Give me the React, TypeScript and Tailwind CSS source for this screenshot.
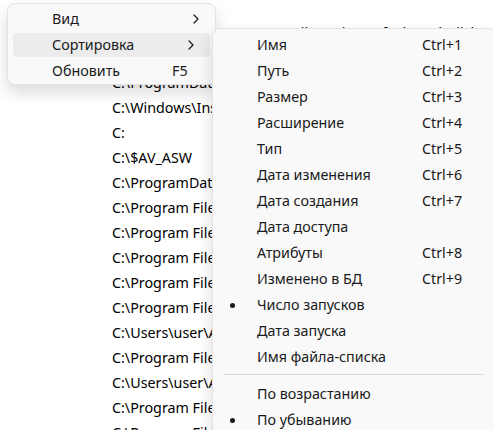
import React from 'react';

const paths = [
  'C:\\Program Files\\Common Files\\microsoft shared\\ClickToRun\\OfficeC2RClient.exe',
  'C:\\ProgramData\\Microsoft\\Windows',
  'C:\\ProgramData\\Microsoft',
  'C:\\Windows\\Installer',
  'C:',
  'C:\\$AV_ASW',
  'C:\\ProgramData\\Package Cache',
  'C:\\Program Files\\Mozilla Firefox',
  'C:\\Program Files\\Google\\Chrome',
  'C:\\Program Files\\Microsoft Office',
  'C:\\Program Files\\7-Zip',
  'C:\\Program Files\\Notepad++',
  'C:\\Users\\user\\AppData\\Local',
  'C:\\Program Files\\WindowsApps',
  'C:\\Users\\user\\AppData\\Roaming',
  'C:\\Program Files\\Everything',
  'C:\\Program Files\\Common Files',
];

const sortItems: { label: string; key?: string; checked?: boolean }[] = [
  { label: 'Имя', key: 'Ctrl+1' },
  { label: 'Путь', key: 'Ctrl+2' },
  { label: 'Размер', key: 'Ctrl+3' },
  { label: 'Расширение', key: 'Ctrl+4' },
  { label: 'Тип', key: 'Ctrl+5' },
  { label: 'Дата изменения', key: 'Ctrl+6' },
  { label: 'Дата создания', key: 'Ctrl+7' },
  { label: 'Дата доступа' },
  { label: 'Атрибуты', key: 'Ctrl+8' },
  { label: 'Изменено в БД', key: 'Ctrl+9' },
  { label: 'Число запусков', checked: true },
  { label: 'Дата запуска' },
  { label: 'Имя файла-списка' },
];

const orderItems = [
  { label: 'По возрастанию', checked: false },
  { label: 'По убыванию', checked: true },
];

const Chevron = () => (
  <svg width="8" height="10" viewBox="0 0 8 10" className="ml-auto mr-[15px] shrink-0">
    <path d="M2 1 L6 5 L2 9" fill="none" stroke="#1a1a1a" strokeWidth="1.2" strokeLinecap="round" strokeLinejoin="round" />
  </svg>
);

const SubItem = ({ label, shortcut, checked }: { label: string; shortcut?: string; checked?: boolean }) => (
  <div className="h-[26px] flex items-center">
    <div className="w-[44px] shrink-0 flex justify-center pr-[6px]">
      {checked && <span className="w-[5px] h-[5px] rounded-full bg-[#1a1a1a]" />}
    </div>
    <span className="w-[165px] shrink-0 whitespace-nowrap">{label}</span>
    {shortcut && <span className="whitespace-nowrap">{shortcut}</span>}
  </div>
);

export default function App() {
  return (
    <div
      className="relative w-[493px] h-[430px] overflow-hidden bg-white text-[14.3px] text-[#1a1a1a]"
      style={{ fontFamily: '"Noto Sans", "Open Sans", sans-serif' }}
    >
      {/* list behind the menus */}
      <div className="flex flex-col pl-[112px] pt-[20px] text-black">
        {paths.map((p, i) => (
          <div key={i} className="h-[25px] leading-[25px] whitespace-nowrap">
            {p}
          </div>
        ))}
      </div>

      {/* context menu */}
      <div className="absolute left-[7px] top-[3px] w-[209px] pt-[2px] rounded-[8px] border border-[#e3e3e3] bg-[#f9f9f9] shadow-[0_8px_16px_rgba(0,0,0,0.14)]">
        <div className="h-[26px] flex items-center pl-[44px]">
          <span>Вид</span>
          <Chevron />
        </div>
        <div className="h-[26px] px-[5px] py-[1px]">
          <div className="h-full flex items-center pl-[39px] rounded-[4px] bg-[#ececec]">
            <span>Сортировка</span>
            <Chevron />
          </div>
        </div>
        <div className="h-[26px] flex items-center pl-[44px]">
          <span className="w-[120px]">Обновить</span>
          <span>F5</span>
        </div>
      </div>

      {/* sort submenu */}
      <div className="absolute left-[212px] top-[28px] w-[284px] pt-[3px] pb-[10px] rounded-[8px] border border-[#e3e3e3] bg-[#f9f9f9] shadow-[0_8px_16px_rgba(0,0,0,0.14)]">
        {sortItems.map((it) => (
          <SubItem key={it.label} label={it.label} shortcut={it.key} checked={it.checked} />
        ))}
        <div className="mx-[11px] mt-[4px] mb-[6px] h-px bg-[#dcdcdc]" />
        {orderItems.map((it) => (
          <SubItem key={it.label} label={it.label} checked={it.checked} />
        ))}
      </div>
    </div>
  );
}
